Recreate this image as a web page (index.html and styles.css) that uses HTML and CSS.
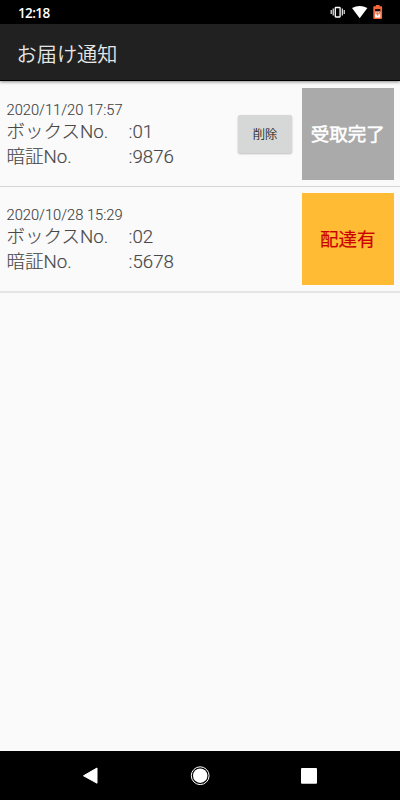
FILE: index.html
```html
<!DOCTYPE html>
<html lang="ja">
<head>
<meta charset="utf-8">
<title>お届け通知</title>
<link rel="stylesheet" href="styles.css">
</head>
<body>
<div class="screen">
  <div class="status">
    <span class="clock">12:18</span>
    <svg class="status-icons" width="54" height="24" viewBox="330 0 54 24">
      <rect x="335.300" y="7.500" width="4.800" height="9.500" rx=".5" fill="none" stroke="#fff" stroke-width="1.300"/>
      <path d="M333.200 8.500v7M331.200 10v4M342.300 8.500v7M344.200 10v4" stroke="#fff" stroke-width="1.100"/>
      <path d="M352 8Q359.700 3.800 367.400 8L359.700 18.200Z" fill="#fff"/>
      <path d="M373.300 7q0-.8.8-.8h1.700v-1.200h3.800v1.200h1.700q.8 0 .8.800v11.200q0 .8-.8.800h-7.200q-.8 0-.8-.8z" fill="#f4683c"/>
      <rect x="375" y="9" width="5.300" height="2.600" fill="#201008"/>
      <rect x="375" y="11.600" width="5.300" height="6" fill="#fff"/>
      <path d="M376 12v1.800h3.400V12M377.700 11.600v4.200" fill="none" stroke="#f4683c" stroke-width="1"/>
    </svg>
  </div>
  <header class="appbar"><h1>お届け通知</h1></header>
  <main class="list">
    <section class="item">
      <div class="info">
        <div class="date">2020/11/20 17:57</div>
        <div class="line"><span class="label"><span class="kana">ボックス</span>No.</span><span>:01</span></div>
        <div class="line"><span class="label"><span class="kana">暗証</span>No.</span><span>:9876</span></div>
      </div>
      <button class="delete">削除</button>
      <div class="state done">受取完了</div>
    </section>
    <section class="item last">
      <div class="info">
        <div class="date">2020/10/28 15:29</div>
        <div class="line"><span class="label"><span class="kana">ボックス</span>No.</span><span>:02</span></div>
        <div class="line"><span class="label"><span class="kana">暗証</span>No.</span><span>:5678</span></div>
      </div>
      <div class="state arrived">配達有</div>
    </section>
  </main>
  <nav class="navbar">
    <svg width="400" height="49" viewBox="0 751 400 49">
      <path d="M83.500 775.800L97 768v15.200z" fill="#fff" stroke="#fff" stroke-width="1" stroke-linejoin="round"/>
      <circle cx="200.200" cy="775.700" r="8.900" fill="none" stroke="#fff" stroke-width="1"/>
      <circle cx="200.200" cy="775.700" r="7.200" fill="#fff"/>
      <rect x="301" y="768" width="16" height="15.700" rx="1" fill="#fff"/>
    </svg>
  </nav>
</div>
</body>
</html>
```
FILE: styles.css
```css
* { box-sizing: border-box; }
body {
  margin: 0;
  background: #fafafa;
  font-family: Roboto, "Noto Sans CJK JP", sans-serif;
}
.screen {
  display: flex;
  flex-direction: column;
  width: 400px;
  height: 800px;
  overflow: hidden;
}
.status {
  display: flex;
  align-items: center;
  justify-content: space-between;
  height: 24px;
  padding: 0 16px 0 18px;
  background: #000;
}
.clock {
  padding-top: 2px;
  color: #fff;
  font: 600 13.500px/20px "Open Sans", sans-serif;
  letter-spacing: -0.600px;
}
.appbar {
  height: 57px;
  padding: 2px 0 0 16.500px;
  background: #212121;
  border-bottom: 1px solid #000;
  box-shadow: 0 1px 3px rgba(0, 0, 0, 0.45);
}
.appbar h1 {
  margin: 0;
  color: #e6e6e6;
  font-size: 20.200px;
  font-weight: 350;
  line-height: 58px;
}
.list { flex: 1; }
.item {
  display: flex;
  height: 106px;
  padding: 7px 6.300px 0 6.500px;
  border-bottom: 1px solid #d4d4d4;
}
.item.last {
  height: 106px;
  padding-top: 6.300px;
  border-bottom: 2px solid #e4e4e4;
}
.info {
  flex: 1;
  padding-top: 13px;
  color: #484848;
}
.date {
  color: #404040;
  font-size: 14.700px;
  font-weight: 300;
  line-height: 18px;
  -webkit-text-stroke: 0.100px #404040;
}
.line {
  display: flex;
  height: 25px;
  font-size: 18.700px;
  font-weight: 300;
  line-height: 26px;
  -webkit-text-stroke: 0.150px #484848;
}
.kana {
  font-size: 18.500px;
}
.label { width: 122px; }
.delete {
  width: 54px;
  height: 38px;
  margin: 27px 10px 0 0;
  padding: 0;
  border: 0;
  border-radius: 2px;
  background: #d6d8d7;
  box-shadow: 0 1px 2px rgba(0, 0, 0, 0.25);
  color: #111;
  font: 300 12.300px Roboto, "Noto Sans CJK JP", sans-serif;
  -webkit-text-stroke: 0.150px #111;
}
.state {
  width: 91.700px;
  height: 91.700px;
  padding-top: 1.500px;
  font-size: 18.500px;
  line-height: 91px;
  text-align: center;
}
.done {
  background: #aaa;
  color: #fff;
  font-weight: 400;
  -webkit-text-stroke: 0.500px #fff;
}
.arrived {
  background: #ffbb33;
  color: #c00;
  font-weight: 400;
  -webkit-text-stroke: 0.200px #c00;
}
.navbar {
  height: 49px;
  background: #000;
}
.navbar svg { display: block; }
```
